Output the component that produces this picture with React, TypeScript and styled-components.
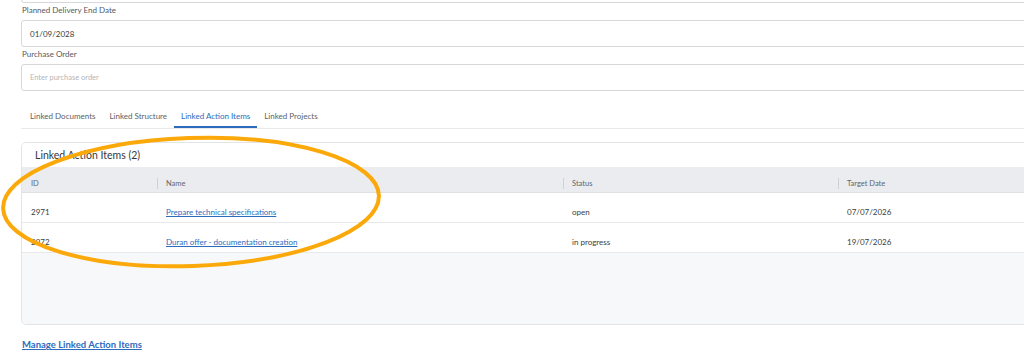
import React from "react";
import styled, { createGlobalStyle } from "styled-components";

const GlobalStyle = createGlobalStyle`
  html, body { margin: 0; padding: 0; background: #ffffff; overflow: hidden; }
  body { font-family: Lato, "Open Sans", "Liberation Sans", sans-serif; color: #333; }
`;

const Page = styled.div`
  position: relative;
  width: 1024px;
  height: 359px;
  overflow: hidden;
`;

const Content = styled.div`
  width: 1140px;
  padding-left: 21px;
  display: flex;
  flex-direction: column;
`;

const Field = styled.div<{ $first?: boolean }>`
  display: flex;
  flex-direction: column;
  margin-top: ${(p) => (p.$first ? "-24px" : "0")};
`;

const Label = styled.div`
  font-size: 8px;
  line-height: 15px;
  color: #555a60;
  padding-left: 1px;
  margin-bottom: 2px;
`;

const InputBox = styled.div`
  box-sizing: border-box;
  height: 27px;
  border: 1px solid #d6d8db;
  border-radius: 3px;
  display: flex;
  align-items: center;
  padding-left: 8px;
  font-size: 8px;
  background: #fff;
`;

const Value = styled.span<{ $placeholder?: boolean }>`
  color: ${(p) => (p.$placeholder ? "#b3b6ba" : "#3a3d41")};
  font-size: ${(p) => (p.$placeholder ? "7.5px" : "8px")};
`;

const TabBar = styled.div`
  margin-top: 13px;
  padding-left: 2px;
  display: flex;
  border-bottom: 1px solid #e8e9eb;
  width: 1108px;
`;

const Tab = styled.div<{ $active?: boolean }>`
  padding: 6px 7px 4px;
  font-size: 8px;
  line-height: 12px;
  color: ${(p) => (p.$active ? "#2d6bbd" : "#5d6166")};
  border-bottom: 2px solid ${(p) => (p.$active ? "#2d6bbd" : "transparent")};
  white-space: nowrap;
`;

const Card = styled.div`
  margin-top: 13px;
  box-sizing: border-box;
  width: 1110px;
  border: 1px solid #e2e4e7;
  border-radius: 5px;
  overflow: hidden;
  display: flex;
  flex-direction: column;
`;

const CardTitle = styled.div`
  height: 24px;
  display: flex;
  align-items: center;
  padding-left: 13px;
  font-size: 10.5px;
  color: #34383c;
  background: #fff;
`;

const Row = styled.div<{ $header?: boolean }>`
  display: grid;
  grid-template-columns: 135px 406px 275px 1fr;
  height: ${(p) => (p.$header ? "26px" : "30px")};
  background: ${(p) => (p.$header ? "#ebecef" : "#ffffff")};
  border-bottom: 1px solid ${(p) => (p.$header ? "#dfe0e3" : "#e8e9eb")};
  box-sizing: border-box;
`;

const HeadCell = styled.div<{ $sep?: boolean }>`
  position: relative;
  display: flex;
  align-items: flex-end;
  padding: 0 0 3px 9px;
  font-size: 7.5px;
  line-height: 10px;
  color: #60656b;
  ${(p) =>
    p.$sep
      ? `&::before {
    content: "";
    position: absolute;
    left: 0;
    bottom: 3px;
    height: 11px;
    border-left: 1px solid #cfd1d5;
  }`
      : ""}
`;

const Cell = styled.div`
  display: flex;
  align-items: flex-end;
  padding: 0 0 5px 9px;
  font-size: 8px;
  line-height: 10px;
  color: #3a3d41;
`;

const NameLink = styled.a`
  color: #2d6bbd;
  text-decoration: underline;
  font-size: 8px;
  cursor: pointer;
`;

const EmptyArea = styled.div`
  height: 71px;
  background: #f7f8fa;
`;

const ManageLink = styled.a`
  margin-top: 14px;
  align-self: flex-start;
  padding-left: 1px;
  font-size: 9.5px;
  font-weight: 700;
  color: #2d6bbd;
  text-decoration: underline;
  cursor: pointer;
`;

const Annotation = styled.svg`
  position: absolute;
  left: 0;
  top: 0;
  pointer-events: none;
`;

const rows = [
  { id: "2971", name: "Prepare technical specifications", status: "open", date: "07/07/2026" },
  { id: "2972", name: "Duran offer - documentation creation", status: "in progress", date: "19/07/2026" },
];

export default function App() {
  return (
    <Page>
      <GlobalStyle />
      <Content>
        <Field $first>
          <InputBox />
        </Field>
        <Field>
          <Label>Planned Delivery End Date</Label>
          <InputBox>
            <Value>01/09/2028</Value>
          </InputBox>
        </Field>
        <Field>
          <Label>Purchase Order</Label>
          <InputBox>
            <Value $placeholder>Enter purchase order</Value>
          </InputBox>
        </Field>
        <TabBar>
          <Tab>Linked Documents</Tab>
          <Tab>Linked Structure</Tab>
          <Tab $active>Linked Action Items</Tab>
          <Tab>Linked Projects</Tab>
        </TabBar>
        <Card>
          <CardTitle>Linked Action Items (2)</CardTitle>
          <Row $header>
            <HeadCell>ID</HeadCell>
            <HeadCell $sep>Name</HeadCell>
            <HeadCell $sep>Status</HeadCell>
            <HeadCell $sep>Target Date</HeadCell>
          </Row>
          {rows.map((r) => (
            <Row key={r.id}>
              <Cell>{r.id}</Cell>
              <Cell>
                <NameLink>{r.name}</NameLink>
              </Cell>
              <Cell>{r.status}</Cell>
              <Cell>{r.date}</Cell>
            </Row>
          ))}
          <EmptyArea />
        </Card>
        <ManageLink>Manage Linked Action Items</ManageLink>
      </Content>
      <Annotation width="1024" height="359" viewBox="0 0 1024 359">
        <ellipse
          cx="191"
          cy="202"
          rx="188"
          ry="64"
          transform="rotate(-2 191 202)"
          fill="none"
          stroke="#FBA90A"
          strokeWidth="4"
        />
      </Annotation>
    </Page>
  );
}
